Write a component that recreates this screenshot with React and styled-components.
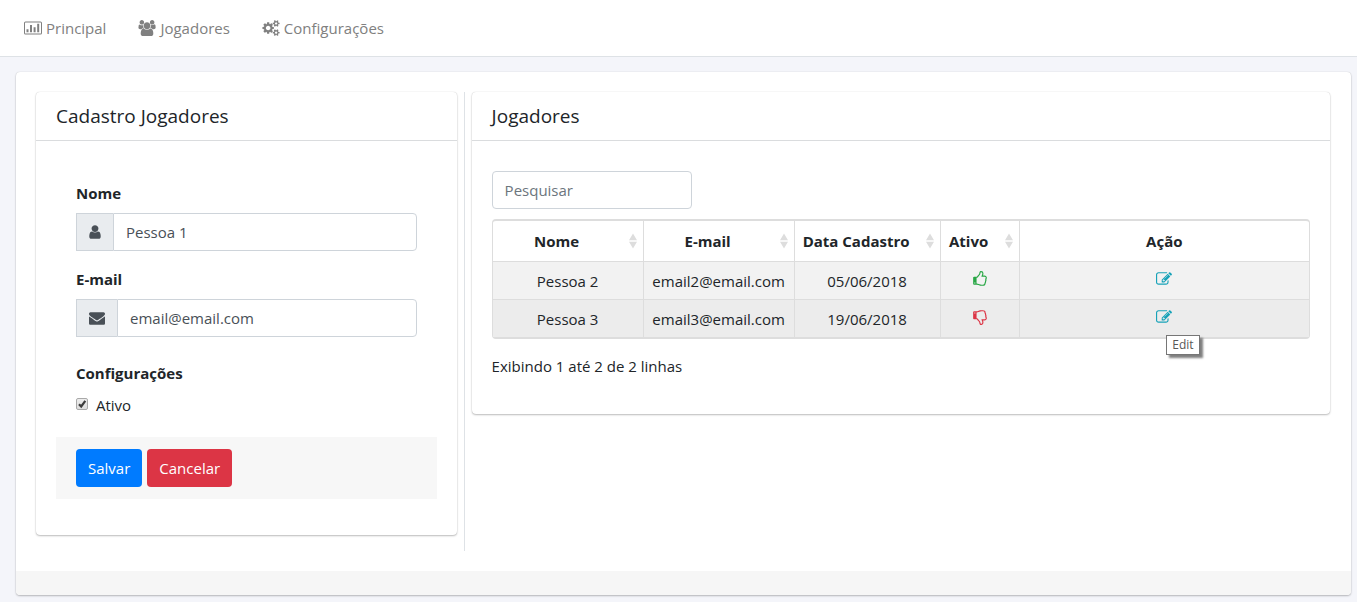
import React from "react";
import styled, { createGlobalStyle, css } from "styled-components";

const GlobalStyle = createGlobalStyle`
  *, *::before, *::after { box-sizing: border-box; }
  body {
    margin: 0;
    background: #f4f5fa;
    color: #212529;
    font-family: "Open Sans", "Noto Sans", sans-serif;
    font-size: 15px;
    line-height: 24px;
  }
  button, input { font: inherit; }
`;

/* ---------- icons ---------- */

const Glyph = styled.svg`
  display: block;
  flex: none;
  height: 16px;
  width: ${(p) => p.$width}px;
  fill: currentColor;
`;

const COG_SMALL =
  "v140q0 16-149 31-12 27-30 52 51 113 51 138 0 4-4 7-122 71-124 71-8 0-46-47t-52-68q-20 2-30 2t-30-2q-14 21-52 68t-46 47q-2 0-124-71-4-3-4-7 0-25 51-138-18-25-30-52-149-15-149-31v-140q0-16 149-31 13-29 30-52-51-113-51-138 0-4 4-7 4-2 35-20t59-34 30-16q8 0 46 46.5t52 67.5q20-2 30-2t30 2q51-71 92-112l6-2q4 0 124 70 4 3 4 7 0 25-51 138 17 23 30 52 149 15 149 31z";

const THUMB =
  "M384 1344q0-26-19-45t-45-19-45 19-19 45 19 45 45 19 45-19 19-45zm1152-576q0-51-39-89.5t-89-38.5h-352q0-58 48-159.5t48-160.5q0-98-32-145t-128-47q-26 26-38 85t-30.5 125.5-59.5 109.5q-22 23-77 91-4 5-23 30t-31.5 41-34.5 42.5-40 44-38.5 35.5-40 27-35.5 9h-32v640h32q13 0 31.5 3t33 6.5 38 11 35 11.5 35.5 12.5 29 10.5q211 73 342 73h121q192 0 192-167 0-26-5-56 30-16 47.5-52.5t17.5-73.5-18-69q53-50 53-119 0-25-10-55.5t-25-47.5q32-1 53.5-47t21.5-81zm128-1q0 89-49 163 9 33 9 69 0 77-38 144 3 21 3 43 0 101-60 178 1 139-85 219.5t-227 80.5h-129q-96 0-189.5-22.5t-216.5-65.5q-116-40-138-40h-288q-53 0-90.5-37.5t-37.5-90.5v-640q0-53 37.5-90.5t90.5-37.5h274q36-24 137-155 58-75 107-128 24-25 35.5-85.5t30.5-126.5 62-108q39-37 90-37 84 0 151 32.5t102 101.5 35 186q0 93-48 192h176q104 0 180 76t76 179z";

const ChartIcon = () => (
  <Glyph $width={18} viewBox="0 0 18 16" aria-hidden="true">
    <path fillRule="evenodd" d="M1.5 1.5h15a1.5 1.5 0 0 1 1.5 1.5v10a1.5 1.5 0 0 1-1.5 1.5h-15a1.5 1.5 0 0 1-1.5-1.5v-10a1.5 1.5 0 0 1 1.5-1.5zm0 1a.5.5 0 0 0-.5.5v10a.5.5 0 0 0 .5.5h15a.5.5 0 0 0 .5-.5v-10a.5.5 0 0 0-.5-.5z" />
    <path d="M2.5 9.3h2v3h-2zM6 5h2v7.3h-2zM9.6 7.3h2v5h-2zM13.2 3.8h2v8.5h-2z" />
  </Glyph>
);

const UsersIcon = () => (
  <Glyph $width={18} viewBox="0 0 1920 1792" aria-hidden="true">
    <path d="M593 896q-162 5-265 128h-134q-82 0-138-40.5t-56-118.5q0-353 124-353 6 0 43.5 21t97.5 42.5 119 21.5q67 0 133-23-5 37-5 66 0 159 93 293zm1071 637q0 120-73 189.5t-194 69.5h-874q-121 0-194-69.5t-73-189.5q0-53 3.5-103.5t14-109 26.5-108.5 43-97.5 62-81 85.5-53.5 111.5-20q10 0 43 21.5t73 48 107 48 135 21.5 135-21.5 107-48 73-48 43-21.5q61 0 111.5 20t85.5 53.5 62 81 43 97.5 26.5 108.5 14 109 3.5 103.5zm-1024-1277q0 106-75 181t-181 75-181-75-75-181 75-181 181-75 181 75 75 181zm704 384q0 159-112.5 271.5t-271.5 112.5-271.5-112.5-112.5-271.5 112.5-271.5 271.5-112.5 271.5 112.5 112.5 271.5zm576 225q0 78-56 118.5t-138 40.5h-134q-103-123-265-128 93-134 93-293 0-29-5-66 66 23 133 23 59 0 119-21.5t97.5-42.5 43.5-21q124 0 124 353zm-128-609q0 106-75 181t-181 75-181-75-75-181 75-181 181-75 181 75 75 181z" />
  </Glyph>
);

const CogsIcon = () => (
  <Glyph $width={18} viewBox="0 0 1920 1792" aria-hidden="true">
    <path d={`M896 896q0-106-75-181t-181-75-181 75-75 181 75 181 181 75 181-75 75-181zm768 512q0-52-38-90t-90-38-90 38-38 90q0 53 37.5 90.5t90.5 37.5 90.5-37.5 37.5-90.5zm0-1024q0-52-38-90t-90-38-90 38-38 90q0 53 37.5 90.5t90.5 37.5 90.5-37.5 37.5-90.5zm-384 421v185q0 10-7 19.5t-16 10.5l-155 24q-11 35-32 76 34 48 90 115 7 11 7 20 0 12-7 19-23 30-82.5 89.5t-78.5 59.5q-11 0-21-7l-115-90q-37 19-77 31-11 108-23 155-7 24-30 24h-186q-11 0-20-7.5t-10-17.5l-23-153q-34-10-75-31l-118 89q-7 7-20 7-11 0-21-8-144-133-144-160 0-9 7-19 10-14 41-53t47-61q-23-44-35-82l-152-24q-10-1-17-9.5t-7-19.5v-185q0-10 7-19.5t16-10.5l155-24q11-35 32-76-34-48-90-115-7-11-7-20 0-12 7-20 22-30 82-89t79-59q11 0 21 7l115 90q34-18 77-32 11-108 23-154 7-24 30-24h186q11 0 20 7.5t10 17.5l23 153q34 10 75 31l118-89q8-7 20-7 11 0 21 8 144 133 144 160 0 8-7 19-12 16-42 54t-45 60q23 48 34 82l152 23q10 2 17 10.5t7 19.5zm640 533${COG_SMALL}M1920 314${COG_SMALL}`} />
  </Glyph>
);

const UserIcon = () => (
  <Glyph $width={12} viewBox="224 0 1344 1792" aria-hidden="true">
    <path d="M1536 1399q0 109-62.5 187t-150.5 78h-854q-88 0-150.5-78t-62.5-187q0-85 8.5-160.5t31.5-152 58.5-131 94-89 134.5-34.5q131 128 313 128t313-128q76 0 134.5 34.5t94 89 58.5 131 31.5 152 8.5 160.5zm-256-887q0 159-112.5 271.5t-271.5 112.5-271.5-112.5-112.5-271.5 112.5-271.5 271.5-112.5 271.5 112.5 112.5 271.5z" />
  </Glyph>
);

const EnvelopeIcon = () => (
  <Glyph $width={16} viewBox="0 0 1792 1792" aria-hidden="true">
    <path d="M1792 710v794q0 66-47 113t-113 47h-1472q-66 0-113-47t-47-113v-794q44 49 101 87 362 246 497 345 57 42 92.5 65.5t94.5 48 110 24.5h2q51 0 110-24.5t94.5-48 92.5-65.5q170-123 498-345 57-39 100-87zm0-294q0 79-49 151t-122 123q-376 261-468 325-10 7-42.5 31t-54 38.5-52 32.5-57.5 27-50 9h-2q-23 0-50-9t-57.5-27-52-32.5-54-38.5-42.5-31q-91-64-262-182.5t-205-142.5q-62-42-117-115.5t-55-136.5q0-78 41.5-130t118.5-52h1472q65 0 112.5 47t47.5 113z" />
  </Glyph>
);

const EditIcon = () => (
  <Glyph $width={16} viewBox="0 0 1792 1792" aria-hidden="true">
    <path d="M888 1184l116-116-152-152-116 116v56h96v96h56zm440-720q-16-16-33 1l-350 350q-17 17-1 33t33-1l350-350q17-17 1-33zm80 594v190q0 119-84.5 203.5t-203.5 84.5h-832q-119 0-203.5-84.5t-84.5-203.5v-832q0-119 84.5-203.5t203.5-84.5h832q63 0 117 25 15 7 18 23 3 17-9 29l-49 49q-14 14-32 8-23-6-45-6h-832q-66 0-113 47t-47 113v832q0 66 47 113t113 47h832q66 0 113-47t47-113v-126q0-13 9-22l64-64q15-15 35-7t20 29zm-96-738l288 288-672 672h-288v-288zm444 132l-92 92-288-288 92-92q28-28 68-28t68 28l152 152q28 28 28 68t-28 68z" />
  </Glyph>
);

const ThumbIcon = ({ up }) => (
  <Glyph $width={16} viewBox="0 0 1792 1792" role="img" aria-label={up ? "Sim" : "Não"}>
    <path d={THUMB} transform={up ? undefined : "translate(0 1792) scale(1 -1)"} />
  </Glyph>
);

const SortIcon = () => (
  <Glyph $width={8} viewBox="0 0 8 16" aria-hidden="true">
    <path d="M4 0.5L8 7.2H0zM0 8.8H8L4 15.5z" />
  </Glyph>
);

/* ---------- navigation ---------- */

const NavBar = styled.nav`
  display: flex;
  align-items: center;
  gap: 32px;
  height: 57px;
  padding: 0 24px;
  background: #fff;
  border-bottom: 1px solid #dee2e6;
`;

const NavLink = styled.a`
  display: flex;
  align-items: center;
  gap: 4px;
  color: #808080;
  text-decoration: none;
`;

/* ---------- cards ---------- */

const cardFrame = css`
  background: #fff;
  border-radius: 4px;
  box-shadow: 0 0 1px rgba(0, 0, 0, 0.2), 0 1px 2px rgba(0, 0, 0, 0.25);
`;

const Page = styled.main`
  ${cardFrame}
  margin: 15px 6px 6px 16px;
`;

const Columns = styled.div`
  display: grid;
  grid-template-columns: minmax(0, 49fr) 1px minmax(0, 100fr);
  column-gap: 7px;
  align-items: start;
  padding: 20px 21px 20px 20px;
`;

const PageFooter = styled.footer`
  height: 24px;
  background: #f6f6f6;
  border-radius: 0 0 4px 4px;
`;

const Divider = styled.div`
  align-self: stretch;
  background: #dee2e6;
`;

const Card = styled.section`
  ${cardFrame}
  margin-bottom: 16px;
`;

const CardTitle = styled.h1`
  margin: 0;
  padding: 12px 20px;
  border-bottom: 1px solid #dadcde;
  font-size: 19px;
  font-weight: 400;
  line-height: 24px;
`;

const CardBody = styled.div`
  padding: 20px 20px 36px;
`;

/* ---------- form ---------- */

const Fields = styled.div`
  padding: 20px;
`;

const Field = styled.div`
  margin-bottom: 16px;
`;

const Options = styled.fieldset`
  margin: 24px 0 0;
  padding: 0;
  border: 0;
`;

const labelText = css`
  display: block;
  margin-bottom: 8px;
  padding: 0;
  font-weight: 700;
`;

const Label = styled.label`
  ${labelText}
`;

const Legend = styled.legend`
  ${labelText}
`;

const InputGroup = styled.div`
  display: flex;
`;

const Addon = styled.span`
  display: flex;
  align-items: center;
  padding: 0 12px;
  color: #495057;
  background: #e9ecef;
  border: 1px solid #ced4da;
  border-right: 0;
`;

const TextInput = styled.input`
  flex: 1;
  min-width: 0;
  width: ${(p) => (p.$search ? "200px" : "auto")};
  height: 38px;
  padding: 0 12px;
  color: #495057;
  background: #fff;
  border: 1px solid #ced4da;
  border-radius: ${(p) => (p.$search ? "4px" : "0 4px 4px 0")};
  outline: 0;
  &::placeholder { color: #6c757d; opacity: 1; }
`;

const CheckLabel = styled.label`
  display: flex;
  align-items: center;
  gap: 8px;
`;

const CheckFrame = styled.span`
  display: grid;
  margin-bottom: 2px;
  > * { grid-area: 1 / 1; }
`;

const Checkbox = styled.input`
  appearance: none;
  width: 12px;
  height: 12px;
  margin: 0;
  border: 1px solid #a9a9a9;
  border-radius: 2px;
  background: linear-gradient(#ededed, #dedede);
  &:not(:checked) + svg { visibility: hidden; }
`;

const CheckMark = styled.svg`
  width: 12px;
  height: 12px;
  pointer-events: none;
`;

const FormFooter = styled.div`
  display: flex;
  gap: 5px;
  padding: 12px 20px;
  background: #f7f7f7;
`;

const Button = styled.button`
  height: 38px;
  padding: 0 12px;
  color: #fff;
  background: ${(p) => (p.$danger ? "#dc3545" : "#007bff")};
  border: 0;
  border-radius: 4px;
`;

/* ---------- table ---------- */

const Search = styled.div`
  display: flex;
  margin: 10px 0;
  ${TextInput} { flex: none; }
`;

const TableFrame = styled.div`
  border: 1px solid #ddd;
  border-width: 2px 1px;
  border-radius: 4px;
`;

const Table = styled.table`
  width: 100%;
  table-layout: fixed;
  border-spacing: 0;
  text-align: center;
`;

const Col = styled.col`
  width: ${(p) => (p.$width ? `${p.$width}px` : "auto")};
`;

const HeadCell = styled.th`
  height: 41px;
  padding: 0;
  border-bottom: 1px solid #ddd;
  border-right: 1px solid #ddd;
  &:last-child { border-right: 0; }
`;

const SortButton = styled.button`
  display: flex;
  align-items: center;
  width: 100%;
  height: 40px;
  padding: 0 6px 0 8px;
  gap: 16px;
  color: inherit;
  background: none;
  border: 0;
  font-weight: 700;
  white-space: nowrap;
  > span { flex: 1; }
  > svg { color: #ddd; }
`;

const Row = styled.tr`
  background: ${(p) => (p.$hover ? "#ececec" : "#f2f2f2")};
`;

const Cell = styled.td`
  height: 38px;
  padding: 0;
  border-right: 1px solid #ddd;
  ${Row}:not(:last-child) > & { border-bottom: 1px solid #ddd; }
  ${Row}:last-child > & { height: 37px; }
  &:last-child { border-right: 0; }
`;

const CellIcon = styled.span`
  display: flex;
  justify-content: center;
  padding-bottom: 3px;
  color: ${(p) => (p.$on ? "#28a745" : "#dc3545")};
`;

const EditLink = styled.a`
  position: relative;
  display: block;
  width: 16px;
  margin: 0 auto 3px;
  color: #17a2b8;
`;

const Tooltip = styled.span`
  position: absolute;
  z-index: 1;
  top: 26px;
  left: 10px;
  padding: 0 5px;
  color: #575757;
  background: #fff;
  border: 1px solid #767676;
  box-shadow: 3px 3px 2px rgba(0, 0, 0, 0.5);
  font-size: 12px;
  line-height: 18px;
`;

const Summary = styled.p`
  margin: 15px 0 0;
`;

const columns = [
  { title: "Nome", width: 151 },
  { title: "E-mail", width: 151 },
  { title: "Data Cadastro", width: 146 },
  { title: "Ativo", width: 79 },
];

const players = [
  { name: "Pessoa 2", email: "email2@email.com", date: "05/06/2018", active: true },
  { name: "Pessoa 3", email: "email3@email.com", date: "19/06/2018", active: false, hover: true },
];

function PlayerForm() {
  return (
    <Card>
      <CardTitle>Cadastro Jogadores</CardTitle>
      <CardBody as="form" onSubmit={(e) => e.preventDefault()}>
        <Fields>
          <Field>
            <Label htmlFor="nome">Nome</Label>
            <InputGroup>
              <Addon><UserIcon /></Addon>
              <TextInput id="nome" type="text" defaultValue="Pessoa 1" />
            </InputGroup>
          </Field>
          <Field>
            <Label htmlFor="email">E-mail</Label>
            <InputGroup>
              <Addon><EnvelopeIcon /></Addon>
              <TextInput id="email" type="email" defaultValue="email@email.com" />
            </InputGroup>
          </Field>
          <Options>
            <Legend>Configurações</Legend>
            <CheckLabel>
              <CheckFrame>
                <Checkbox type="checkbox" defaultChecked />
                <CheckMark viewBox="0 0 12 12" aria-hidden="true">
                  <path d="M3 6.2l2.2 2.3L9.3 2.8" fill="none" stroke="#3c3c3c" strokeWidth="2.2" />
                </CheckMark>
              </CheckFrame>
              Ativo
            </CheckLabel>
          </Options>
        </Fields>
        <FormFooter>
          <Button type="submit">Salvar</Button>
          <Button type="button" $danger>Cancelar</Button>
        </FormFooter>
      </CardBody>
    </Card>
  );
}

function PlayerList() {
  return (
    <Card>
      <CardTitle as="h2">Jogadores</CardTitle>
      <CardBody>
        <Search>
          <TextInput $search type="text" placeholder="Pesquisar" aria-label="Pesquisar" />
        </Search>
        <TableFrame>
          <Table>
            <colgroup>
              {columns.map((c) => <Col key={c.title} $width={c.width} />)}
              <Col />
            </colgroup>
            <thead>
              <tr>
                {columns.map((c) => (
                  <HeadCell key={c.title} scope="col">
                    <SortButton type="button"><span>{c.title}</span><SortIcon /></SortButton>
                  </HeadCell>
                ))}
                <HeadCell scope="col">Ação</HeadCell>
              </tr>
            </thead>
            <tbody>
              {players.map((p) => (
                <Row key={p.name} $hover={p.hover}>
                  <Cell>{p.name}</Cell>
                  <Cell>{p.email}</Cell>
                  <Cell>{p.date}</Cell>
                  <Cell><CellIcon $on={p.active}><ThumbIcon up={p.active} /></CellIcon></Cell>
                  <Cell>
                    <EditLink href="#editar" aria-label={`Edit ${p.name}`}>
                      <EditIcon />
                      {p.hover && <Tooltip role="tooltip">Edit</Tooltip>}
                    </EditLink>
                  </Cell>
                </Row>
              ))}
            </tbody>
          </Table>
        </TableFrame>
        <Summary>Exibindo 1 até 2 de 2 linhas</Summary>
      </CardBody>
    </Card>
  );
}

export default function App() {
  return (
    <>
      <GlobalStyle />
      <NavBar>
        <NavLink href="#principal"><ChartIcon />Principal</NavLink>
        <NavLink href="#jogadores"><UsersIcon />Jogadores</NavLink>
        <NavLink href="#configuracoes"><CogsIcon />Configurações</NavLink>
      </NavBar>
      <Page>
        <Columns>
          <PlayerForm />
          <Divider />
          <PlayerList />
        </Columns>
        <PageFooter />
      </Page>
    </>
  );
}
